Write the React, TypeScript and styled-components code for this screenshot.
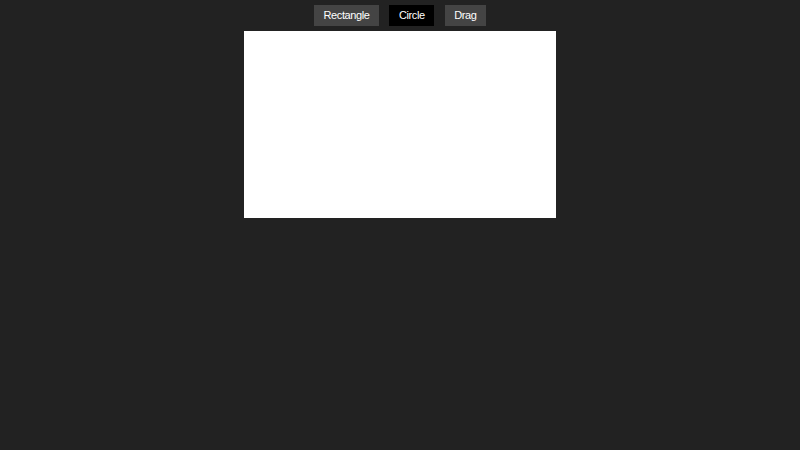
import { createGlobalStyle } from 'styled-components'
import styled from 'styled-components'
import { useState } from 'react'

const GlobalStyle = createGlobalStyle`
  html, body {
    margin: 0;
    padding: 0;
    background: #222222;
    font-family: 'Liberation Sans', Arial, sans-serif;
  }
`

const Page = styled.div({
  display: 'flex',
  flexDirection: 'column',
  alignItems: 'center',
  paddingTop: '5px',
  gap: '5px',
})

const Toolbar = styled.div({
  display: 'flex',
  gap: '10.5px',
})

const ToolButton = styled.button<{ active: boolean }>`
  height: 21px;
  padding: 0 9.5px;
  border: none;
  background: ${({ active }) => (active ? '#000000' : '#444444')};
  color: #ffffff;
  font-family: 'Liberation Sans', Arial, sans-serif;
  font-size: 11px;
  letter-spacing: -0.4px;
  line-height: 21px;
  cursor: pointer;
`

const Canvas = styled.div({
  width: '312px',
  height: '187px',
  background: '#ffffff',
})

const tools = ['Rectangle', 'Circle', 'Drag']

const App = () => {
  const [tool, setTool] = useState('Circle')

  return (
    <Page>
      <GlobalStyle />
      <Toolbar>
        {tools.map(t => (
          <ToolButton key={t} active={tool === t} onClick={() => setTool(t)}>
            {t}
          </ToolButton>
        ))}
      </Toolbar>
      <Canvas />
    </Page>
  )
}

export default App
